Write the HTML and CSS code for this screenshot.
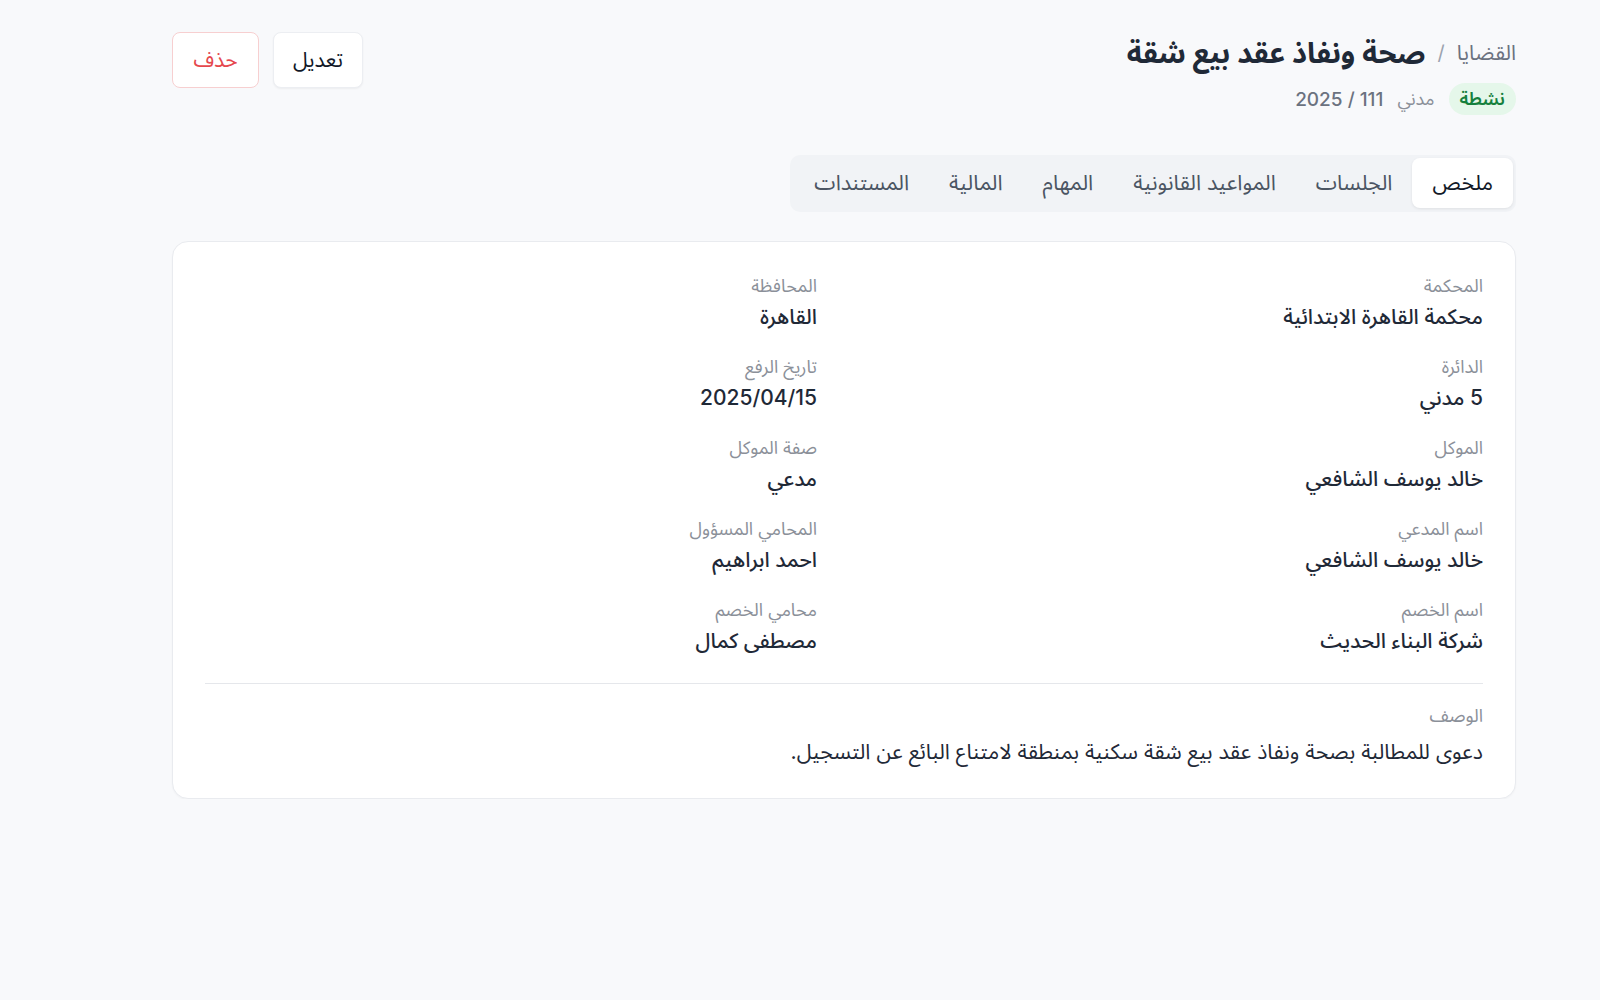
FILE: index.html
```html
<!DOCTYPE html>
<html lang="ar" dir="rtl">
<head>
<meta charset="utf-8">
<title>صحة ونفاذ عقد بيع شقة</title>
<link rel="stylesheet" href="styles.css">
</head>
<body>
<main class="page">
  <header class="header">
    <div class="heading">
      <div class="title-row">
        <span class="crumb">القضايا</span>
        <span class="sep">/</span>
        <h1 class="title">صحة ونفاذ عقد بيع شقة</h1>
      </div>
      <div class="meta-row">
        <span class="badge">نشطة</span>
        <span class="type">مدني</span>
        <span class="number">111 / 2025</span>
      </div>
    </div>
    <div class="actions">
      <button class="btn btn-edit">تعديل</button>
      <button class="btn btn-delete">حذف</button>
    </div>
  </header>

  <nav class="tabs">
    <span class="tab active">ملخص</span>
    <span class="tab">الجلسات</span>
    <span class="tab">المواعيد القانونية</span>
    <span class="tab">المهام</span>
    <span class="tab">المالية</span>
    <span class="tab">المستندات</span>
  </nav>

  <section class="card">
    <div class="grid">
      <div class="field"><div class="label">المحكمة</div><div class="value">محكمة القاهرة الابتدائية</div></div>
      <div class="field"><div class="label">المحافظة</div><div class="value">القاهرة</div></div>
      <div class="field"><div class="label">الدائرة</div><div class="value">5 مدني</div></div>
      <div class="field"><div class="label">تاريخ الرفع</div><div class="value">2025/04/15</div></div>
      <div class="field"><div class="label">الموكل</div><div class="value">خالد يوسف الشافعي</div></div>
      <div class="field"><div class="label">صفة الموكل</div><div class="value">مدعي</div></div>
      <div class="field"><div class="label">اسم المدعي</div><div class="value">خالد يوسف الشافعي</div></div>
      <div class="field"><div class="label">المحامي المسؤول</div><div class="value">احمد ابراهيم</div></div>
      <div class="field"><div class="label">اسم الخصم</div><div class="value">شركة البناء الحديث</div></div>
      <div class="field"><div class="label">محامي الخصم</div><div class="value">مصطفى كمال</div></div>
    </div>
    <div class="desc">
      <div class="label">الوصف</div>
      <p class="desc-text">دعوى للمطالبة بصحة ونفاذ عقد بيع شقة سكنية بمنطقة لامتناع البائع عن التسجيل.</p>
    </div>
  </section>
</main>
</body>
</html>
```
FILE: styles.css
```css
* { box-sizing: border-box; }
html, body {
  margin: 0;
  background: #f8f9fb;
}
body {
  font-family: Inter, "Noto Sans Arabic", "Noto Sans", sans-serif;
  color: #1f2937;
  direction: rtl;
}
.page {
  padding: 32px 84px 0 172px;
}
.header {
  display: flex;
  justify-content: space-between;
  align-items: flex-start;
}
.heading {
  display: flex;
  flex-direction: column;
  gap: 9px;
}
.title-row {
  display: flex;
  align-items: center;
  gap: 12px;
  height: 42px;
}
.crumb {
  font-size: 21px;
  color: #6b7280;
}
.sep {
  font-size: 20px;
  color: #9ca3af;
}
.title {
  margin: 0;
  font-size: 29px;
  font-weight: 700;
  color: #1f2937;
}
.meta-row {
  display: flex;
  align-items: center;
  gap: 14px;
  height: 32px;
}
.badge {
  display: inline-flex;
  align-items: center;
  justify-content: center;
  height: 32px;
  padding: 0 11px;
  border-radius: 999px;
  background: #e5f7ea;
  color: #15803d;
  font-size: 18px;
  font-weight: 600;
}
.type {
  font-size: 18px;
  color: #8b9099;
}
.number {
  font-size: 19px;
  color: #6b7280;
  font-weight: 500;
}
.actions {
  display: flex;
  gap: 14px;
}
.btn {
  height: 56px;
  padding: 0 18px;
  border-radius: 8px;
  background: #fff;
  font-family: inherit;
  font-size: 21px;
  cursor: pointer;
}
.btn-edit {
  border: 1px solid #eceef2;
  color: #111827;
  box-shadow: 0 1px 2px rgba(0,0,0,0.05);
  min-width: 90px;
}
.btn-delete {
  border: 1px solid #f7cfd0;
  color: #e5484d;
  min-width: 87px;
}
.tabs {
  display: inline-flex;
  margin-top: 40px;
  padding: 3px 3px 4px 4px;
  background: #f1f3f6;
  border-radius: 10px;
}
.tab {
  display: inline-flex;
  align-items: center;
  height: 50px;
  padding: 0 20px;
  font-size: 21.5px;
  color: #4b5563;
  border-radius: 8px;
}
.tab.active {
  background: #fff;
  color: #111827;
  box-shadow: 0 1px 3px rgba(0,0,0,0.08);
  padding: 0 20px;
}
.card {
  margin-top: 29px;
  background: #fff;
  border: 1px solid #e9ebef;
  border-radius: 16px;
  padding: 32px 32px 31px;
  box-shadow: 0 1px 2px rgba(0,0,0,0.03);
}
.grid {
  display: grid;
  grid-template-columns: 1fr 1fr;
  column-gap: 54px;
  row-gap: 23px;
  padding-bottom: 27px;
  border-bottom: 1px solid #e5e7eb;
}
.label {
  font-size: 18px;
  line-height: 24px;
  color: #8b9099;
}
.value {
  margin-top: 4px;
  font-size: 21px;
  line-height: 30px;
  font-weight: 500;
  color: #1f2937;
}
.desc {
  padding-top: 20px;
}
.desc-text {
  margin: 7px 0 0;
  font-size: 21.3px;
  line-height: 32px;
  color: #1f2937;
}
```
